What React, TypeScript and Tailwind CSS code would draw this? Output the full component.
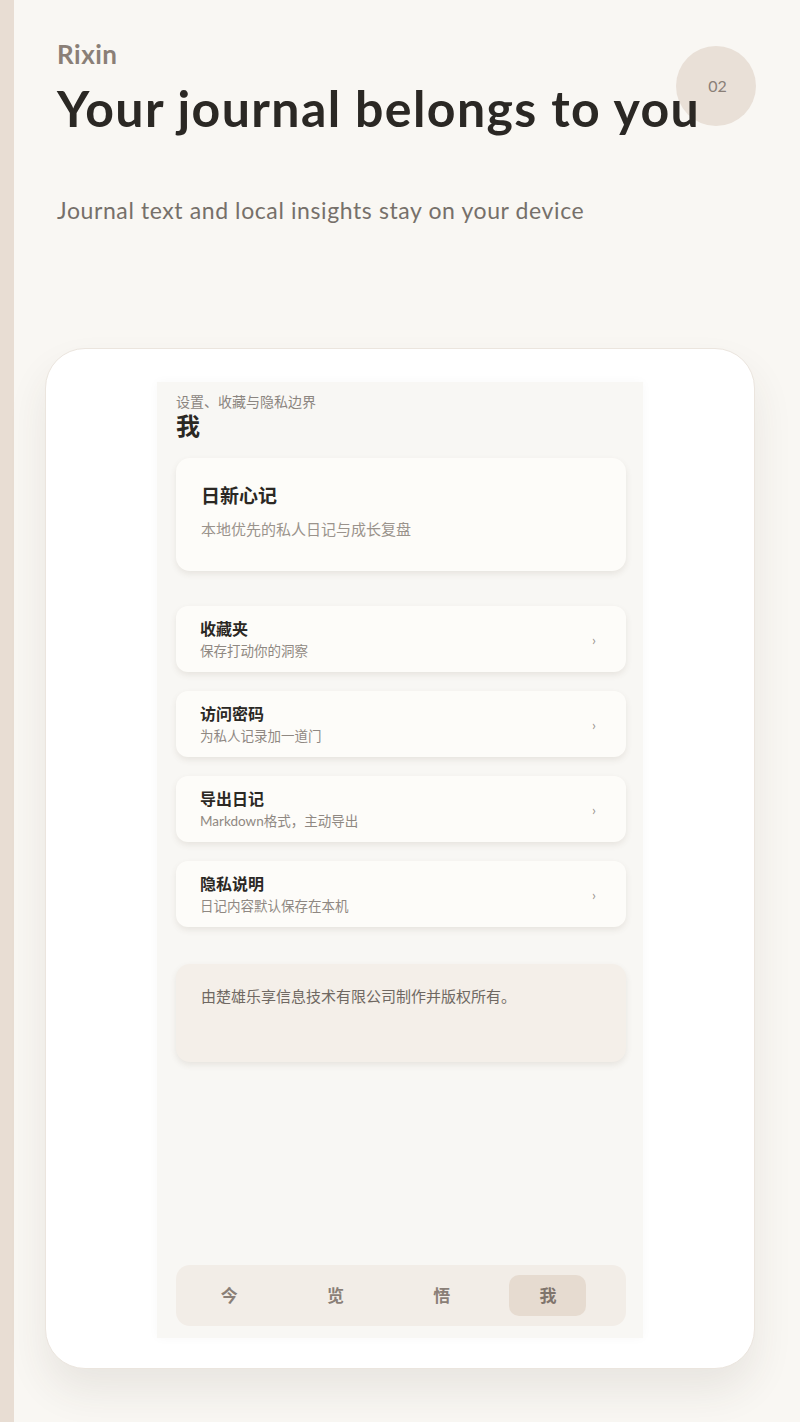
const font = { fontFamily: 'Lato, "Noto Sans CJK SC", sans-serif' };

const items = [
  { title: '收藏夹', sub: '保存打动你的洞察' },
  { title: '访问密码', sub: '为私人记录加一道门' },
  { title: '导出日记', sub: 'Markdown格式，主动导出' },
  { title: '隐私说明', sub: '日记内容默认保存在本机' },
];

const tabs = ['今', '览', '悟', '我'];

const SettingRow = ({ title, sub }: { title: string; sub: string }) => (
  <div className="h-[66px] flex items-center justify-between pl-[24px] pr-[30px] rounded-[12px] bg-[#fdfcf9] shadow-[0_3px_6px_rgba(90,70,50,0.10)]">
    <div className="flex flex-col">
      <div className="text-[16px] leading-[20px] font-bold text-[#2b2824]">{title}</div>
      <div className="mt-[3px] text-[13.5px] leading-[18px] text-[#8f8882]">{sub}</div>
    </div>
    <span className="text-[14px] text-[#9a948e]">›</span>
  </div>
);

export default function App() {
  return (
    <div className="min-h-[1422px] flex bg-[#f9f7f3]" style={font}>
      <div className="w-[14px] shrink-0 bg-[#e8ddd3]" />
      <div className="flex-1 pl-[31px] pr-[45px] pb-[53px]">
        <header className="relative pl-[12px] pt-[38px]">
          <div className="absolute left-[631px] top-[46px] w-[80px] h-[80px] rounded-full bg-[#e9e0d7] flex items-center justify-center">
            <span className="ml-[3px] text-[16px] text-[#8a7f77]">02</span>
          </div>
          <div className="relative text-[26px] leading-[32px] font-bold tracking-[0.5px] text-[#8a7f77]">Rixin</div>
          <h1 className="relative mt-[8px] text-[50px] leading-[60px] font-bold tracking-[1.4px] text-[#2b2824]">
            Your journal belongs to you
          </h1>
          <p className="mt-[57px] text-[23px] leading-[30px] tracking-[0.6px] text-[#76706a]">
            Journal text and local insights stay on your device
          </p>
        </header>

        <section className="mt-[123px] h-[1021px] rounded-[40px] bg-white border border-[#ebe5de] shadow-[0_22px_40px_rgba(70,55,40,0.09)] px-[111px] pt-[33px] pb-[30px]">
          <div className="h-full flex flex-col bg-[#f8f7f4] pl-[19px] pr-[17px] pt-[11px] pb-[12px] shadow-[0_0_10px_rgba(0,0,0,0.03)]">
            <div className="text-[14px] leading-[17px] text-[#8b8580]">设置、收藏与隐私边界</div>
            <div className="mt-[2px] text-[24px] leading-[28px] font-bold text-[#2b2824]">我</div>

            <div className="mt-[18px] h-[113px] rounded-[14px] bg-[#fdfcf9] shadow-[0_3px_6px_rgba(90,70,50,0.10)] pl-[25px] pt-[26px]">
              <div className="text-[19px] leading-[24px] font-bold text-[#2b2824]">日新心记</div>
              <div className="mt-[11px] text-[15px] leading-[20px] text-[#9a938c]">本地优先的私人日记与成长复盘</div>
            </div>

            <div className="mt-[35px] flex flex-col gap-[19px]">
              {items.map((it) => (
                <SettingRow key={it.title} title={it.title} sub={it.sub} />
              ))}
            </div>

            <div className="mt-[37px] h-[98px] rounded-[14px] bg-[#f4efe9] shadow-[0_3px_6px_rgba(90,70,50,0.10)] pl-[25px] pt-[21px]">
              <div className="text-[15px] leading-[22px] text-[#6f6862]">由楚雄乐享信息技术有限公司制作并版权所有。</div>
            </div>

            <nav className="mt-auto h-[61px] rounded-[14px] bg-[#f2ede7] grid grid-cols-4 pr-[25px] py-[10px]">
              {tabs.map((t, i) => (
                <div key={t} className="flex items-center justify-center">
                  <div
                    className={
                      i === 3
                        ? 'w-[77px] h-[41px] rounded-[10px] bg-[#e6dbd0] flex items-center justify-center text-[17px] font-bold text-[#7f746c]'
                        : 'w-[77px] h-[41px] flex items-center justify-center text-[17px] font-bold text-[#8a7f77]'
                    }
                  >
                    {t}
                  </div>
                </div>
              ))}
            </nav>
          </div>
        </section>
      </div>
    </div>
  );
}
